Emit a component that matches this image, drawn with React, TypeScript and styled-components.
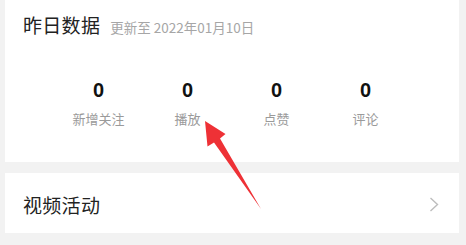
import React from 'react'
import styled, { createGlobalStyle } from 'styled-components'

const GlobalStyle = createGlobalStyle`
  html, body {
    margin: 0;
    padding: 0;
    background: #f2f2f2;
  }
  body {
    font-family: "Noto Sans CJK SC", "Noto Sans", sans-serif;
  }
`

const Page = styled.div`
  position: relative;
  width: 466px;
  height: 245px;
  box-sizing: border-box;
  padding: 0 7px 0 5px;
  background: #f2f2f2;
  overflow: hidden;
`

const Card = styled.div<{ $height: number }>`
  background: #fff;
  height: ${(p) => p.$height}px;
  box-sizing: border-box;
  & + & {
    margin-top: 11px;
  }
`

const Header = styled.div`
  display: flex;
  align-items: baseline;
  height: 50px;
  line-height: 50px;
  padding-left: 18px;
`

const Title = styled.span`
  font-size: 19px;
  color: #222;
  letter-spacing: 0.3px;
`

const SubTitle = styled.span`
  font-size: 13.5px;
  color: #a6a6a6;
  margin-left: 10px;
`

const Stats = styled.div`
  display: grid;
  grid-template-columns: repeat(4, 1fr);
  padding: 0 49px;
  margin-top: 28px;
`

const Stat = styled.div`
  display: flex;
  flex-direction: column;
  align-items: center;
`

const StatValue = styled.div`
  font-family: "Liberation Sans", Arial, sans-serif;
  font-size: 20px;
  font-weight: 700;
  line-height: 24px;
  color: #111;
`

const StatLabel = styled.div`
  font-size: 13px;
  line-height: 18px;
  color: #9a9a9a;
  margin-top: 8px;
`

const Row = styled.div`
  display: flex;
  align-items: center;
  justify-content: space-between;
  height: 100%;
  padding: 3px 20px 0 18px;
  box-sizing: border-box;
`

const RowTitle = styled.span`
  font-size: 19px;
  color: #222;
  letter-spacing: 0.3px;
`

const Arrow = styled.svg`
  position: absolute;
  left: 0;
  top: 0;
  pointer-events: none;
`

const stats = [
  { value: 0, label: '新增关注' },
  { value: 0, label: '播放' },
  { value: 0, label: '点赞' },
  { value: 0, label: '评论' },
]

export default function App() {
  return (
    <Page>
      <GlobalStyle />
      <Card $height={162}>
        <Header>
          <Title>昨日数据</Title>
          <SubTitle>更新至 2022年01月10日</SubTitle>
        </Header>
        <Stats>
          {stats.map((s) => (
            <Stat key={s.label}>
              <StatValue>{s.value}</StatValue>
              <StatLabel>{s.label}</StatLabel>
            </Stat>
          ))}
        </Stats>
      </Card>

      <Card $height={60}>
        <Row>
          <RowTitle>视频活动</RowTitle>
          <svg width="10" height="15" viewBox="0 0 10 15">
            <path d="M1.5 1 L8.5 7.5 L1.5 14" fill="none" stroke="#bdbdbd" strokeWidth="1.4" />
          </svg>
        </Row>
      </Card>

      {/* red annotation arrow pointing at 播放 */}
      <Arrow width="466" height="245" viewBox="0 0 466 245">
        <polygon
          points="205,121 225.5,134 220,138.5 261,209 214,142.5 207.5,146.5"
          fill="#ee3136"
        />
      </Arrow>
    </Page>
  )
}
